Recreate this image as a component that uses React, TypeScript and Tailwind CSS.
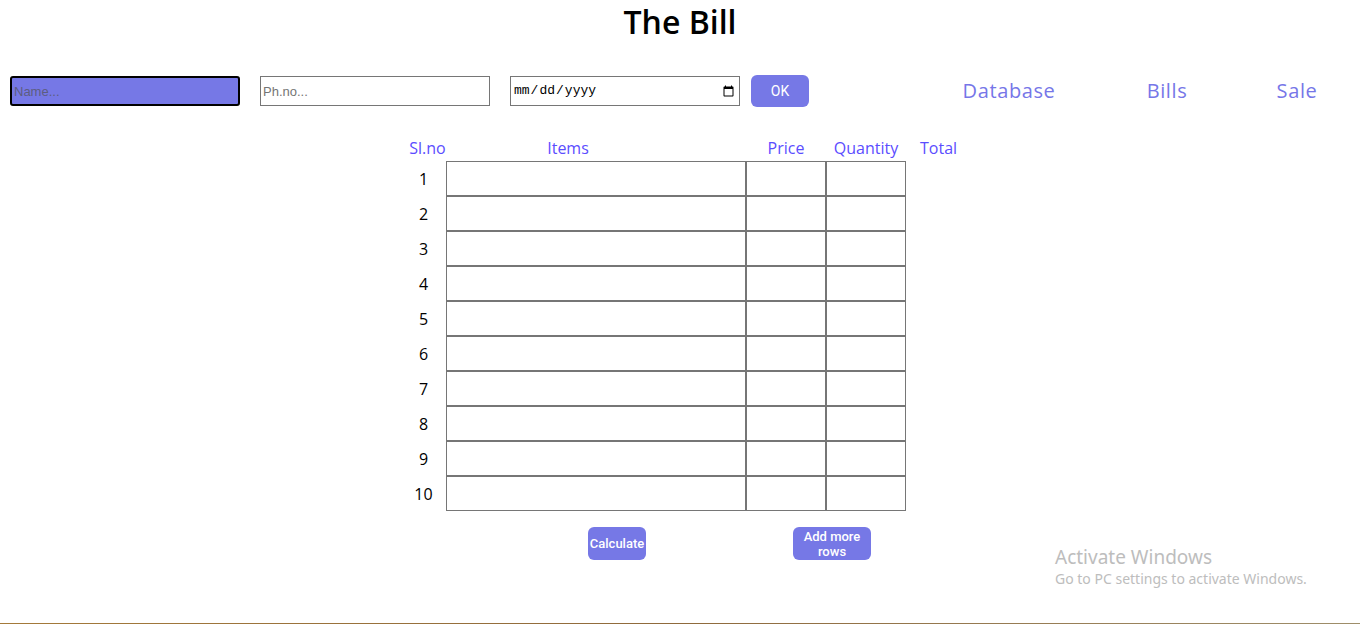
import React from 'react';

const rows = Array.from({ length: 10 }, (_, i) => i + 1);

const cellInput = 'h-[35px] border border-[#767676] bg-white outline-none px-1 text-[13px]';

export default function App() {
  return (
    <div className="relative w-[1360px] h-[624px] bg-white overflow-hidden font-['Open_Sans',sans-serif]">
      <h1 className="text-center text-[32px] leading-[38px] pt-[3px] font-semibold text-black">The Bill</h1>

      <div className="flex items-center mt-[34px] pl-[10px]">
        <input
          placeholder="Name..."
          className="shrink-0 w-[230px] h-[30px] rounded-[3px] border-2 border-black bg-[#7678e6] px-0.5 text-[13px] font-['Liberation_Sans',sans-serif] placeholder:text-[#5d5d80] outline-none"
        />
        <input
          placeholder="Ph.no..."
          className="shrink-0 ml-[20px] w-[230px] h-[30px] border border-[#767676] px-0.5 text-[13px] font-['Liberation_Sans',sans-serif] placeholder:text-[#757575] outline-none"
        />
        <input
          type="date"
          className="shrink-0 ml-[20px] w-[230px] h-[30px] border border-[#767676] px-0.5 text-[13px] font-['Liberation_Mono',monospace] outline-none"
        />
        <button className="shrink-0 ml-[11px] w-[58px] h-[32px] rounded-md bg-[#7678e6] text-white text-[14px] font-['Roboto',sans-serif]">
          OK
        </button>
        <nav className="flex ml-[135px] text-[20px] tracking-[0.6px] text-[#7676e8]">
          <a className="w-[130px] text-center">Database</a>
          <a className="ml-[28px] w-[130px] text-center">Bills</a>
          <a className="w-[130px] text-center">Sale</a>
        </nav>
      </div>

      <div className="mt-[29px] ml-[405px] w-[560px]">
        <div className="grid grid-cols-[41px_300px_80px_80px_auto] text-[16px] leading-[24px] text-[#5b4dff]">
          <div className="text-center pl-1">Sl.no</div>
          <div className="text-center pr-[56px]">Items</div>
          <div className="text-center">Price</div>
          <div className="text-center">Quantity</div>
          <div className="pl-[14px]">Total</div>
        </div>
        <div className="grid grid-cols-[41px_300px_80px_80px] mt-px">
          {rows.map((n) => (
            <React.Fragment key={n}>
              <div className="flex items-center justify-center pr-1 text-[16px] text-black">{n}</div>
              <input className={cellInput} />
              <input className={cellInput} />
              <input className={cellInput} />
            </React.Fragment>
          ))}
        </div>
        <div className="flex mt-[16px] font-['Roboto',sans-serif] text-[13px] font-medium text-white">
          <button className="ml-[183px] w-[58px] h-[33px] rounded-md bg-[#7678e6] px-0 leading-[15px]">Calculate</button>
          <button className="ml-[147px] w-[78px] h-[33px] rounded-md bg-[#7678e6] px-1 leading-[15px]">Add more rows</button>
        </div>
      </div>

      <div className="absolute left-[1055px] top-[545px] text-[#bdbdbd] font-['Noto_Sans',sans-serif]">
        <div className="text-[19px] leading-[24px]">Activate Windows</div>
        <div className="text-[14px] leading-[20px]">Go to PC settings to activate Windows.</div>
      </div>

      <div className="absolute left-0 bottom-0 w-full h-px bg-linear-to-r from-[#a47a3a] via-[#8f6a3c] to-[#9e8e6a]" />
    </div>
  );
}
